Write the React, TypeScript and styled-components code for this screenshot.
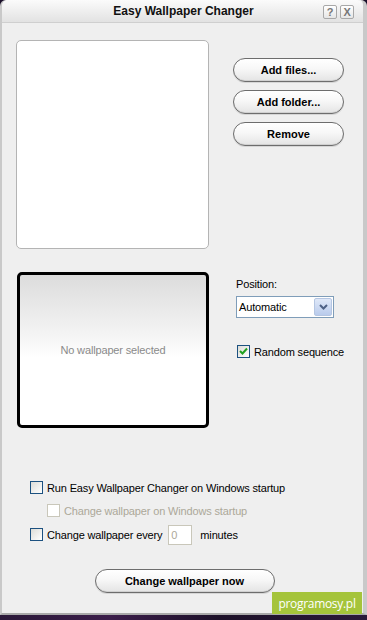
import styled, { createGlobalStyle } from 'styled-components';

const GlobalStyle = createGlobalStyle`
  html, body {
    margin: 0;
    padding: 0;
    background: #1a0f2a;
  }
  body {
    font-family: "Liberation Sans", Arial, sans-serif;
    font-size: 11px;
    letter-spacing: -0.15px;
    color: #000;
  }
`;

export default function App() {
    return (
        <>
            <GlobalStyle />
            <Screen>
                <Window>
                    <TitleBar>
                        <Title>Easy Wallpaper Changer</Title>
                        <TitleButtons>
                            <TitleButton>?</TitleButton>
                            <TitleButton>X</TitleButton>
                        </TitleButtons>
                    </TitleBar>

                    <Body>
                        <TopRow>
                            <FileList />
                            <ButtonStack>
                                <PillButton>Add files...</PillButton>
                                <PillButton>Add folder...</PillButton>
                                <PillButton>Remove</PillButton>
                            </ButtonStack>
                        </TopRow>

                        <MiddleRow>
                            <Preview>No wallpaper selected</Preview>
                            <Options>
                                <Label>Position:</Label>
                                <Select>
                                    <SelectValue>Automatic</SelectValue>
                                    <SelectArrow>
                                        <svg width="9" height="6" viewBox="0 0 9 6">
                                            <path d="M1 1 L4.5 4.5 L8 1" fill="none" stroke="#4d6185" strokeWidth="2" />
                                        </svg>
                                    </SelectArrow>
                                </Select>
                                <CheckRow $indent={0} $top={26}>
                                    <CheckBox>
                                        <svg width="9" height="9" viewBox="0 0 9 9">
                                            <path d="M1 4 L3.5 6.5 L8 1.5" fill="none" stroke="#21a121" strokeWidth="2" />
                                        </svg>
                                    </CheckBox>
                                    <span>Random sequence</span>
                                </CheckRow>
                            </Options>
                        </MiddleRow>

                        <Settings>
                            <CheckRow $indent={0} $top={0}>
                                <CheckBox />
                                <span>Run Easy Wallpaper Changer on Windows startup</span>
                            </CheckRow>
                            <CheckRow $indent={17} $top={0} $disabled>
                                <CheckBox $disabled />
                                <span>Change wallpaper on Windows startup</span>
                            </CheckRow>
                            <CheckRow $indent={0} $top={1}>
                                <CheckBox />
                                <span>Change wallpaper every</span>
                                <NumberBox>0</NumberBox>
                                <span>minutes</span>
                            </CheckRow>
                        </Settings>

                        <Footer>
                            <PillButton $wide>Change wallpaper now</PillButton>
                        </Footer>
                    </Body>

                    <Badge>programosy.pl</Badge>
                </Window>
                <Taskbar />
            </Screen>
        </>
    );
}

const Screen = styled.div`
  width: 367px;
  height: 620px;
  display: flex;
  flex-direction: column;
  overflow: hidden;
`;

const Window = styled.div`
  position: relative;
  height: 615px;
  box-sizing: border-box;
  background: #efefef;
  border-left: 2px solid #c9c9c9;
  border-right: 4px solid #c9c9c9;
  border-bottom: 2px solid #a9a9a9;
  border-radius: 6px 6px 0 0;
  display: flex;
  flex-direction: column;
`;

const Taskbar = styled.div`
  flex: 1;
  background: linear-gradient(90deg, #2a1838 0%, #3b1d4a 30%, #1c1028 60%, #2b1a3a 100%);
`;

const TitleBar = styled.div`
  height: 22px;
  flex: none;
  display: flex;
  align-items: center;
  justify-content: center;
  position: relative;
  background: linear-gradient(#fbfbfb, #e2e2e2);
  border-bottom: 1px solid #cfcfcf;
  border-radius: 6px 6px 0 0;
`;

const Title = styled.div`
  font-weight: bold;
  font-size: 12px;
  letter-spacing: 0;
  color: #111;
  padding-left: 2px;
`;

const TitleButtons = styled.div`
  position: absolute;
  right: 9px;
  top: 5px;
  display: flex;
  gap: 3px;
`;

const TitleButton = styled.div`
  width: 12px;
  height: 12px;
  border: 1px solid #a8a8a8;
  border-radius: 2px;
  background: linear-gradient(#ffffff, #e6e6e6);
  color: #777;
  font-size: 11px;
  font-weight: bold;
  line-height: 12px;
  text-align: center;
`;

const Body = styled.div`
  flex: 1;
  display: flex;
  flex-direction: column;
  padding: 17px 0 0 14px;
`;

const TopRow = styled.div`
  display: flex;
  align-items: flex-start;
`;

const FileList = styled.div`
  width: 191px;
  height: 207px;
  background: #fff;
  border: 1px solid #b4b4b4;
  border-radius: 5px;
`;

const ButtonStack = styled.div`
  margin: 18px 0 0 24px;
  display: flex;
  flex-direction: column;
  gap: 8px;
`;

const PillButton = styled.div<{ $wide?: boolean }>`
  width: ${({ $wide }) => ($wide ? '178px' : '109px')};
  height: 22px;
  border: 1px solid #6d6d6d;
  border-radius: 12px;
  background: linear-gradient(#ffffff 0%, #f7f7f7 45%, #e4e4e4 100%);
  box-shadow: inset 0 -1px 0 #d0d0d0, 0 1px 0 #d6d6d6;
  display: flex;
  align-items: center;
  justify-content: center;
  font-weight: bold;
  font-size: 11px;
  letter-spacing: 0;
  color: #000;
`;

const MiddleRow = styled.div`
  display: flex;
  align-items: flex-start;
  margin-top: 23px;
`;

const Preview = styled.div`
  margin-left: 1px;
  width: 186px;
  height: 150px;
  border: 3px solid #000;
  border-radius: 5px;
  background: linear-gradient(#dcdcdc 0%, #f4f4f4 40%, #ffffff 55%, #ffffff 100%);
  display: flex;
  align-items: center;
  justify-content: center;
  color: #8a8a8a;
  font-size: 11px;
`;

const Options = styled.div`
  margin: 6px 0 0 27px;
  display: flex;
  flex-direction: column;
  align-items: flex-start;
`;

const Label = styled.div`
  line-height: 13px;
  margin-bottom: 5px;
`;

const Select = styled.div`
  width: 96px;
  height: 20px;
  border: 1px solid #7f9db9;
  background: #fff;
  display: flex;
  align-items: stretch;
`;

const SelectValue = styled.div`
  flex: 1;
  padding-left: 2px;
  display: flex;
  align-items: center;
`;

const SelectArrow = styled.div`
  width: 16px;
  margin: 1px;
  border: 1px solid #b5c6e2;
  border-radius: 2px;
  background: linear-gradient(#dfe8f8, #b9cbec);
  display: flex;
  align-items: center;
  justify-content: center;
`;

const CheckRow = styled.div<{ $indent: number; $top: number; $disabled?: boolean }>`
  display: flex;
  align-items: center;
  gap: 4px;
  height: 15px;
  margin-top: ${({ $top }) => $top}px;
  padding-left: ${({ $indent }) => $indent + 1}px;
  color: ${({ $disabled }) => ($disabled ? '#aca899' : '#000')};
  white-space: nowrap;
`;

const CheckBox = styled.div<{ $disabled?: boolean }>`
  width: 11px;
  height: 11px;
  flex: none;
  border: 1px solid ${({ $disabled }) => ($disabled ? '#c9c7ba' : '#1c5180')};
  background: ${({ $disabled }) => ($disabled ? '#fff' : 'linear-gradient(135deg, #dcdcd7, #ffffff)')};
  display: flex;
  align-items: center;
  justify-content: center;
`;

const Settings = styled.div`
  margin: 52px 0 0 13px;
  display: flex;
  flex-direction: column;
  gap: 8px;
`;

const NumberBox = styled.div`
  width: 20px;
  height: 18px;
  margin: 0 4px 0 2px;
  border: 1px solid #c9c7ba;
  background: #fff;
  color: #aca899;
  padding-left: 2px;
  display: flex;
  align-items: center;
`;

const Footer = styled.div`
  display: flex;
  justify-content: center;
  margin: 27px 0 0 -10px;
`;

const Badge = styled.div`
  position: absolute;
  right: 1px;
  bottom: -1px;
  width: 90px;
  height: 22px;
  background: #a5c43b;
  color: #fff;
  font-family: "Open Sans", "Liberation Sans", sans-serif;
  font-size: 12px;
  letter-spacing: -0.3px;
  display: flex;
  align-items: center;
  justify-content: center;
`;
